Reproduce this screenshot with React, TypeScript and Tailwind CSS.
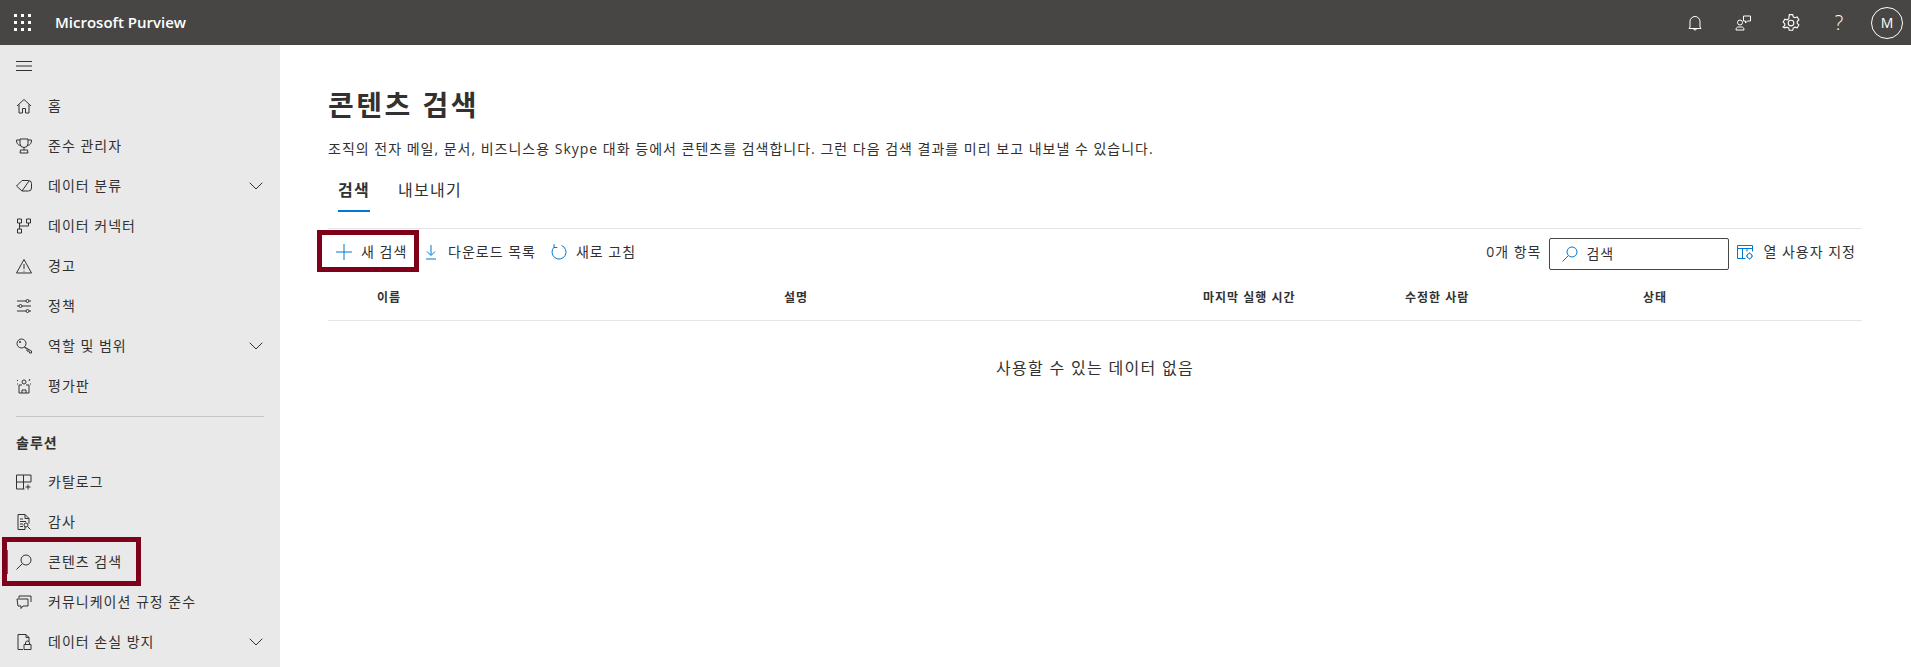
import { ChevronDown } from "lucide-react";
import type { ReactNode } from "react";

/* ================= ICONS ================= */

const Ico = ({ children, className = "" }: { children: ReactNode; className?: string }) => (
  <svg
    viewBox="0 0 16 16"
    fill="none"
    stroke="currentColor"
    strokeWidth={1}
    className={`w-4 h-4 shrink-0 ${className}`}
  >
    {children}
  </svg>
);

const HomeIcon = () => (
  <Ico>
    <path d="M1 8 8 1.500 15 8M3 6.500V15h3.500v-4.500h3V15H13V6.500" />
  </Ico>
);
const TrophyIcon = () => (
  <Ico>
    <path d="M4 1h8v4.500a4 4 0 0 1-8 0ZM4 2H.5c0 3 1 5 4 5.500M12 2h3.500c0 3-1 5-4 5.500M8 9.500V12M4.500 12h7l.5 3H4Z" />
  </Ico>
);
const TagIcon = () => (
  <Ico>
    <path d="M.5 8 6 2.500h6.500a3 3 0 0 1 3 3V10a3 3 0 0 1-3 3H6ZM6 13 13 3" />
  </Ico>
);
const ConnectorIcon = () => (
  <Ico>
    <path d="M1.500 1h4v4h-4ZM10.500 1h4v4h-4ZM1.500 11h4v4h-4ZM3.500 5v6M12.500 5v3h-9" />
  </Ico>
);
const AlertIcon = () => (
  <Ico>
    <path d="M8 1.500 15.500 15H.5ZM8 6v5M8 12.500v1" />
  </Ico>
);
const PolicyIcon = () => (
  <Ico>
    <path d="M1 3h9M13 3h2M1 8h2M6 8h9M1 13h9M13 13h2" />
    <circle cx="11.500" cy="3" r="1.500" />
    <circle cx="4.500" cy="8" r="1.500" />
    <circle cx="11.500" cy="13" r="1.500" />
  </Ico>
);
const KeyIcon = () => (
  <Ico>
    <circle cx="5.500" cy="5.500" r="4.500" />
    <path d="M8.500 9 11 11.500 11 13 13 13 13.500 15 15.500 15 15.500 13Z" />
    <circle cx="4" cy="4" r="0.700" />
  </Ico>
);
const ScoreIcon = () => (
  <Ico>
    <path d="M3 7h3M10 7h3M3 7v8h10V7M6 15v-3h4v3M1 2l1 1M1 6h1M14 6h1M14 1l-1 2" />
    <circle cx="8" cy="4" r="2" />
  </Ico>
);
const CatalogIcon = () => (
  <Ico>
    <path d="M.5 1h14.500v7M.5 1v14h8M.5 8h14.500M7.500 1v14M12 10.500v5M9.500 13h5" />
  </Ico>
);
const AuditIcon = () => (
  <Ico>
    <path d="M9 12.500V15.500H2V.5h7l4 4v5M9 .5v4h4M4 5h3M4 7.500h6M4 10h3M4 12.500h3" />
    <circle cx="10" cy="11" r="2" />
    <path d="m11.500 12.500 3 3" />
  </Ico>
);
const SearchIcon = ({ className = "" }: { className?: string }) => (
  <Ico className={className}>
    <circle cx="10" cy="6" r="5" />
    <path d="M6.300 9.700.5 15.500" />
  </Ico>
);
const CommIcon = () => (
  <Ico>
    <path d="M15 8V2H3v2M1 5h11v7H7l-2 2.500V12H2Z" />
  </Ico>
);
const DlpIcon = () => (
  <Ico>
    <path d="M7 15.500H2V.5h8l3 3v4M10 .5v3h3M8 15.500V10.500h7v5ZM9.500 10.500V9a2 2 0 0 1 4 0v1.500" />
  </Ico>
);
const ColumnsIcon = () => (
  <Ico className="text-[#0078d4]">
    <path d="M.5 1.500h15v6M.5 1.500v13h8M.5 4.500h15M5.500 4.500v10M10 4.500v3" />
    <circle cx="12.500" cy="12" r="2.500" />
    <path d="M12.500 8.500v1M12.500 14.500v1M9 12h1M15 12h1" />
  </Ico>
);

/* ================= DATA ================= */

const topItems = [
  { label: "홈", icon: <HomeIcon /> },
  { label: "준수 관리자", icon: <TrophyIcon /> },
  { label: "데이터 분류", icon: <TagIcon />, chevron: true },
  { label: "데이터 커넥터", icon: <ConnectorIcon /> },
  { label: "경고", icon: <AlertIcon /> },
  { label: "정책", icon: <PolicyIcon /> },
  { label: "역할 및 범위", icon: <KeyIcon />, chevron: true },
  { label: "평가판", icon: <ScoreIcon /> },
];

const solutionItems = [
  { label: "카탈로그", icon: <CatalogIcon /> },
  { label: "감사", icon: <AuditIcon /> },
  { label: "콘텐츠 검색", icon: <SearchIcon />, active: true },
  { label: "커뮤니케이션 규정 준수", icon: <CommIcon /> },
  { label: "데이터 손실 방지", icon: <DlpIcon />, chevron: true },
];

const columns = ["이름", "설명", "마지막 실행 시간", "수정한 사람", "상태"];

type NavItemProps = {
  label: string;
  icon: ReactNode;
  chevron?: boolean;
  active?: boolean;
};

function NavItem({ label, icon, chevron, active }: NavItemProps) {
  return (
    <div className="relative h-10 flex items-center pl-4 pr-3 text-sm text-[#323130]">
      {active && (
        <>
          <div className="absolute left-[7px] top-[8px] h-6 w-px bg-[#0078d4]" />
          {/* annotation box */}
          <div className="absolute left-[2px] top-[-5px] w-[139px] h-[49px] border-[5px] border-[#7f0019]" />
        </>
      )}
      {icon}
      <span className="ml-4 flex-1">{label}</span>
      {chevron && <ChevronDown className="w-6 h-6" strokeWidth={1} />}
    </div>
  );
}

function HeaderIcon({ children }: { children: ReactNode }) {
  return <div className="w-12 h-[45px] flex items-center justify-center">{children}</div>;
}

export default function App() {
  return (
    <div className="h-[667px] overflow-hidden flex flex-col bg-white text-[#323130] tracking-[1px] font-['Open_Sans','Noto_Sans_CJK_KR',sans-serif]">
      {/* HEADER */}
      <header className="h-[45px] shrink-0 bg-[#484644] text-white flex items-center tracking-normal">
        <div className="w-[45px] flex justify-center">
          <div className="grid grid-cols-3 gap-[4px]">
            {Array.from({ length: 9 }).map((_, i) => (
              <div key={i} className="w-[3px] h-[3px] bg-white" />
            ))}
          </div>
        </div>
        <div className="ml-[10px] text-[15px] font-semibold flex-1">Microsoft Purview</div>

        <div className="flex items-center text-white">
          <HeaderIcon>
            <svg viewBox="0 0 16 16" fill="none" stroke="currentColor" className="w-4 h-4">
              <path d="M3 12V6.500a5 5 0 0 1 10 0V12l1 1.500H2ZM6.500 13.500a1.500 1.500 0 0 0 3 0" />
            </svg>
          </HeaderIcon>
          <HeaderIcon>
            <svg viewBox="0 0 16 16" fill="none" stroke="currentColor" className="w-4 h-4">
              <circle cx="5" cy="7.500" r="2.500" />
              <path d="M1 15c0-2 1-3 2-3h4c1 0 2 1 2 3ZM8.500 1h7v5h-3l-2 2V6h-2Z" />
            </svg>
          </HeaderIcon>
          <HeaderIcon>
            <svg viewBox="0 0 16 16" fill="none" stroke="currentColor" className="w-[18px] h-[18px]">
              <circle cx="8" cy="8" r="2.500" />
              <path d="M6.500.5h3l.5 2 1.500.8 2-.6 1.500 2.600-1.500 1.400v1.600l1.500 1.400-1.500 2.600-2-.6-1.500.8-.5 2h-3l-.5-2-1.500-.8-2 .6L1 11.600l1.500-1.400V8.600L1 7.200l1.500-2.600 2 .6L6 4.400Z" />
            </svg>
          </HeaderIcon>
          <HeaderIcon>
            <span className="text-[20px] font-light leading-none">?</span>
          </HeaderIcon>
          <HeaderIcon>
            <div className="w-8 h-8 rounded-full border border-white flex items-center justify-center text-sm">
              M
            </div>
          </HeaderIcon>
        </div>
      </header>

      <div className="flex flex-1 min-h-0">
        {/* SIDEBAR */}
        <aside className="w-[280px] shrink-0 bg-[#e9e9e9] pt-px">
          <div className="h-10 flex items-center pl-4">
            <svg viewBox="0 0 16 16" stroke="#323130" className="w-4 h-4">
              <path d="M0 3.500h16M0 8h16M0 12.500h16" />
            </svg>
          </div>

          {topItems.map((item) => (
            <NavItem key={item.label} {...item} />
          ))}

          <div className="mx-4 mt-[10px] h-px bg-[#c8c6c4] w-[248px]" />
          <div className="h-[51px] pl-4 flex items-center text-sm font-semibold">솔루션</div>

          <div className="-mt-[6px]">
            {solutionItems.map((item) => (
              <NavItem key={item.label} {...item} />
            ))}
          </div>
        </aside>

        {/* CONTENT */}
        <main className="flex-1 min-w-0 pl-[48px] pr-[49px]">
          <h1 className="mt-[39px] text-[28px] leading-[42px] font-bold tracking-[2.5px]">콘텐츠 검색</h1>
          <p className="mt-[13px] text-sm leading-5">
            조직의 전자 메일, 문서, 비즈니스용 Skype 대화 등에서 콘텐츠를 검색합니다. 그런 다음 검색 결과를 미리 보고 내보낼 수 있습니다.
          </p>

          {/* TABS */}
          <div className="mt-[19px] h-[51px] flex items-start gap-7 pl-[10px] text-base tracking-[1.3px] border-b border-[#e5e5e5]">
            <div className="h-[34px] border-b-2 border-[#0078d4] font-semibold leading-6">검색</div>
            <div className="leading-6">내보내기</div>
          </div>

          {/* TOOLBAR */}
          <div className="h-[46px] flex items-center text-sm">
            <div className="relative h-full w-[92px] flex items-center pl-2">
              <svg viewBox="0 0 16 16" fill="none" stroke="#0078d4" className="w-4 h-4 shrink-0">
                <path d="M8 0v16M0 8h16" />
              </svg>
              <span className="ml-[9px]">새 검색</span>
              {/* annotation box */}
              <div className="absolute left-[-11px] top-px w-[102px] h-[42px] border-[5px] border-[#7f0019]" />
            </div>
            <div className="flex items-center ml-[3px]">
              <svg viewBox="0 0 16 16" fill="none" stroke="#0078d4" className="w-4 h-4 shrink-0">
                <path d="M8 1v10M4 7.500 8 11.500l4-4M3 15h10" />
              </svg>
              <span className="ml-[9px]">다운로드 목록</span>
            </div>
            <div className="flex items-center ml-[15px]">
              <svg viewBox="0 0 16 16" fill="none" stroke="#0078d4" className="w-4 h-4 shrink-0">
                <path d="M10.500 1.500A7 7 0 1 1 3 3.200M3 .2v3.300h3.300" />
              </svg>
              <span className="ml-[9px]">새로 고침</span>
            </div>

            <div className="ml-auto flex items-center">
              <span>0개 항목</span>
              <div className="ml-2 mt-1 w-[180px] h-8 border border-[#484644] rounded-[2px] flex items-center pl-3">
                <SearchIcon className="text-[#0078d4]" />
                <span className="ml-2">검색</span>
              </div>
              <div className="ml-2 flex items-center mr-[6px]">
                <ColumnsIcon />
                <span className="ml-[10px]">열 사용자 지정</span>
              </div>
            </div>
          </div>

          {/* TABLE */}
          <div className="h-[46px] grid grid-cols-[407px_419px_202px_238px_1fr] items-center pl-[49px] text-xs font-semibold border-b border-[#e5e5e5]">
            {columns.map((col) => (
              <div key={col}>{col}</div>
            ))}
          </div>
          <div className="mt-[35px] text-center text-base leading-6 tracking-[1.3px]">사용할 수 있는 데이터 없음</div>
        </main>
      </div>
    </div>
  );
}
